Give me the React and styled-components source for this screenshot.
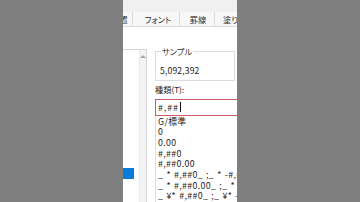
import React from "react";
import styled, { createGlobalStyle } from "styled-components";

const Global = createGlobalStyle`
  html, body { margin: 0; padding: 0; }
  body { width: 360px; height: 202px; overflow: hidden; background: #7f7f7f; }
  * { box-sizing: border-box; }
`;

const Screen = styled.div`
  width: 360px;
  height: 202px;
  display: flex;
  overflow: hidden;
  font-family: "Noto Sans CJK JP", "Noto Sans", sans-serif;
  font-feature-settings: "palt";
  color: #222;
`;

const Shade = styled.div`
  flex: ${(p) => (p.$grow ? 1 : "none")};
  width: ${(p) => (p.$grow ? "auto" : `${p.$w}px`)};
  background: #7f7f7f;
`;

const Dialog = styled.div`
  width: 114px;
  flex: none;
  background: #f0f0f0;
  display: flex;
  flex-direction: column;
  overflow: hidden;
`;

const TopBand = styled.div`
  height: 12px;
  flex: none;
`;

const TabStrip = styled.div`
  height: 15px;
  flex: none;
  display: flex;
  background: #f7f7f7;
  border-bottom: 1px solid #dadada;
  margin-left: -16px;
`;

const Tab = styled.div`
  flex: none;
  width: ${(p) => p.$w}px;
  display: flex;
  align-items: center;
  justify-content: ${(p) => (p.$start ? "flex-start" : "center")};
  padding-left: ${(p) => p.$pl || 0}px;
  font-size: 8.2px;
  line-height: 1;
  white-space: nowrap;
  border-right: 1px solid #dcdcdc;
  color: #333;
`;

const Page = styled.div`
  flex: 1;
  background: #ffffff;
  display: flex;
  padding-top: 20px;
  gap: 8px;
  min-height: 0;
`;

const CategoryBox = styled.div`
  width: 24px;
  flex: none;
  margin-top: 2px;
  border-top: 1px solid #d4d4d4;
  border-right: 1px solid #d4d4d4;
  display: flex;
`;

const CategoryItems = styled.div`
  flex: 1;
  padding-top: 118px;
`;

const SelectedItem = styled.div`
  width: 11px;
  height: 11px;
  background: #0a7bd6;
`;

const ScrollTrack = styled.div`
  width: 7px;
  flex: none;
  background: #f3f3f3;
  border-left: 1px solid #e9e9e9;
  display: flex;
  justify-content: center;
  padding-top: 5px;
`;

const UpArrow = styled.div`
  width: 0;
  height: 0;
  border-left: 3px solid transparent;
  border-right: 3px solid transparent;
  border-bottom: 3px solid #a6a6a6;
`;

const RightCol = styled.div`
  width: 110px;
  flex: none;
  display: flex;
  flex-direction: column;
`;

const Group = styled.fieldset`
  width: 80px;
  margin: 0;
  padding: 9px 0 0 4px;
  height: 34px;
  border: 1px solid #dcdcdc;
  min-width: 0;
`;

const Legend = styled.legend`
  font-size: 8.2px;
  line-height: 9px;
  padding: 0 1px;
  margin-left: 1px;
  color: #333;
`;

const SampleValue = styled.div`
  font-size: 8.6px;
  line-height: 10px;
  color: #222;
  letter-spacing: 0.15px;
`;

const Label = styled.div`
  font-size: 8.2px;
  line-height: 10px;
  margin-top: 3px;
  color: #222;
`;

const Input = styled.div`
  margin-top: 5px;
  height: 17px;
  border: 1px solid #c85a66;
  border-right: none;
  padding-left: 2px;
  display: flex;
  align-items: center;
  font-size: 8.8px;
  letter-spacing: 0.9px;
  color: #222;
`;

const Caret = styled.span`
  display: inline-block;
  width: 1px;
  height: 10px;
  background: #111;
  margin-left: 1px;
`;

const TypeList = styled.div`
  padding: 1px 0 0 2px;
  border-left: 1px solid #dcdcdc;
`;

const TypeItem = styled.div`
  font-size: 8.8px;
  line-height: 10.7px;
  height: 10.7px;
  white-space: pre;
  letter-spacing: 0.35px;
  word-spacing: 0.8px;
  color: #222;
`;

const types = [
  "G/標準",
  "0",
  "0.00",
  "#,##0",
  "#,##0.00",
  "_ * #,##0_ ;_ * -#,##0_ ;_ * \"-\"_ ;_ @_ ",
  "_ * #,##0.00_ ;_ * -#,##0.00_ ;_ * \"-\"??_ ;_ @_ ",
  "_ ¥* #,##0_ ;_ ¥* -#,##0_ ;_ ¥* \"-\"_ ;_ @_ ",
];

export default function App() {
  return (
    <>
      <Global />
      <Screen>
        <Shade $w={123} />
        <Dialog>
          <TopBand />
          <TabStrip>
            <Tab $w={26}>配置</Tab>
            <Tab $w={47} $pl={4}>フォント</Tab>
            <Tab $w={35} $pl={2}>罫線</Tab>
            <Tab $w={48} $pl={8} $start>塗りつぶし</Tab>
          </TabStrip>
          <Page>
            <CategoryBox>
              <CategoryItems>
                <SelectedItem />
              </CategoryItems>
              <ScrollTrack>
                <UpArrow />
              </ScrollTrack>
            </CategoryBox>
            <RightCol>
              <Group>
                <Legend>サンプル</Legend>
                <SampleValue>5,092,392</SampleValue>
              </Group>
              <Label>種類(T):</Label>
              <Input>
                #,##
                <Caret />
              </Input>
              <TypeList>
                {types.map((t) => (
                  <TypeItem key={t}>{t}</TypeItem>
                ))}
              </TypeList>
            </RightCol>
          </Page>
        </Dialog>
        <Shade $grow />
      </Screen>
    </>
  );
}
